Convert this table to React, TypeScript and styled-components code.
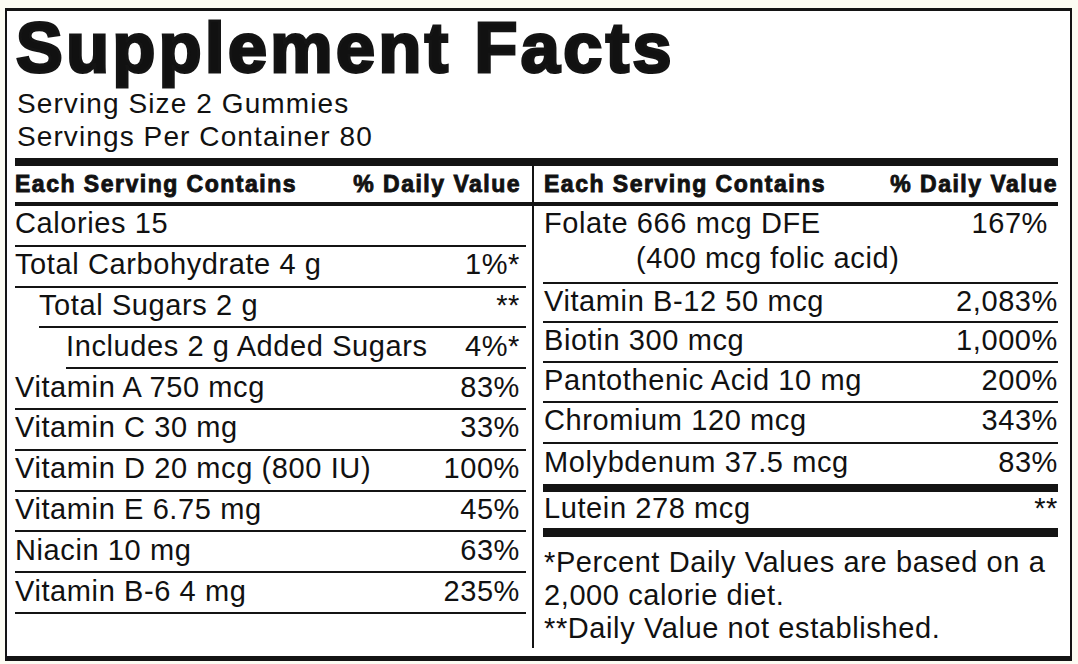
import React from 'react';
import styled, { createGlobalStyle } from 'styled-components';

const Global = createGlobalStyle`
  html, body { margin: 0; padding: 0; background: #fcfcf3; }
  body { font-family: "Liberation Sans", Arial, Helvetica, sans-serif; color: #111; }
`;

const INK = '#141414';

const Page = styled.div`
  width: 1078px;
  height: 664px;
  padding: 8px 0 0 5px;
  box-sizing: border-box;
  overflow: hidden;
`;

const Label = styled.div`
  box-sizing: border-box;
  width: 1067px;
  height: 653px;
  background: #fff;
  border-top: 3px solid ${INK};
  border-left: 2px solid ${INK};
  border-right: 2px solid ${INK};
  border-bottom: 5px solid ${INK};
  padding: 0 12px 8px 8px;
  display: flex;
  flex-direction: column;
`;

const Title = styled.h1`
  margin: 2px 0 0 1px;
  font-size: 70px;
  line-height: 70px;
  font-weight: 700;
  letter-spacing: 3.5px;
  -webkit-text-stroke: 3px ${INK};
  white-space: nowrap;
`;

const Serving = styled.div`
  margin-top: 3.5px;
  padding-left: 2px;
  font-size: 28px;
  line-height: 33px;
  letter-spacing: 1.1px;
  white-space: nowrap;
`;

const TopBar = styled.div`
  margin-top: 5.5px;
  height: 8px;
  background: ${INK};
`;

const Columns = styled.div`
  flex: 1;
  display: grid;
  grid-template-columns: 517px 2px 1fr;
  min-height: 0;
`;

const Divider = styled.div`
  background: ${INK};
`;

const Column = styled.div`
  display: flex;
  flex-direction: column;
  min-width: 0;
`;

const HeaderRow = styled.div<{ $side: 'left' | 'right' }>`
  height: 40px;
  box-sizing: border-box;
  border-bottom: 4px solid ${INK};
  display: flex;
  align-items: center;
  justify-content: space-between;
  padding: ${(p) => (p.$side === 'left' ? '0 11px 0 0' : '0 0 0 10px')};
  font-size: 23px;
  font-weight: 700;
  letter-spacing: 1.5px;
  -webkit-text-stroke: 0.9px ${INK};
  white-space: nowrap;
`;

const Row = styled.div<{ $indent?: number; $h?: number; $rule?: number; $side: 'left' | 'right' }>`
  box-sizing: border-box;
  height: ${(p) => p.$h ?? 40.8}px;
  margin-left: ${(p) => (p.$side === 'right' ? 9 : 0) + (p.$indent ?? 0)}px;
  margin-right: ${(p) => (p.$side === 'left' ? 6 : 0)}px;
  border-bottom: ${(p) => p.$rule ?? 2}px solid ${INK};
  display: flex;
  align-items: center;
  justify-content: space-between;
  padding: ${(p) => (p.$side === 'left' ? '0 6px 3px 0' : '0 0 3px 1px')};
  font-size: 29px;
  letter-spacing: 0.6px;
  white-space: nowrap;
`;

const TallRow = styled.div`
  box-sizing: border-box;
  height: 78px;
  margin-left: 9px;
  border-bottom: 2px solid ${INK};
  display: flex;
  align-items: flex-start;
  justify-content: space-between;
  padding: 0 10px 0 1px;
  font-size: 29px;
  line-height: 35px;
  letter-spacing: 0.6px;
  white-space: nowrap;
`;

const SubLine = styled.div`
  padding-left: 92px;
`;

const Value = styled.span`
  text-align: right;
`;

const Footnote = styled.div`
  margin-left: 9px;
  padding: 9px 0 0 1px;
  font-size: 29px;
  line-height: 33px;
  letter-spacing: 0.6px;
`;

type Item = { name: string; dv?: string; indent?: number };

const leftItems: Item[] = [
  { name: 'Calories 15' },
  { name: 'Total Carbohydrate 4 g', dv: '1%*' },
  { name: 'Total Sugars 2 g', dv: '**', indent: 24 },
  { name: 'Includes 2 g Added Sugars', dv: '4%*', indent: 51 },
  { name: 'Vitamin A 750 mcg', dv: '83%' },
  { name: 'Vitamin C 30 mg', dv: '33%' },
  { name: 'Vitamin D 20 mcg (800 IU)', dv: '100%' },
  { name: 'Vitamin E 6.75 mg', dv: '45%' },
  { name: 'Niacin 10 mg', dv: '63%' },
  { name: 'Vitamin B-6 4 mg', dv: '235%' },
];

const rightItems: (Item & { h: number; rule?: number })[] = [
  { name: 'Vitamin B-12 50 mcg', dv: '2,083%', h: 39 },
  { name: 'Biotin 300 mcg', dv: '1,000%', h: 40 },
  { name: 'Pantothenic Acid 10 mg', dv: '200%', h: 39.5 },
  { name: 'Chromium 120 mcg', dv: '343%', h: 41 },
  { name: 'Molybdenum 37.5 mcg', dv: '83%', h: 48.5, rule: 8 },
  { name: 'Lutein 278 mcg', dv: '**', h: 45, rule: 9 },
];

export default function App() {
  return (
    <Page>
      <Global />
      <Label>
        <Title>Supplement Facts</Title>
        <Serving>
          <div>Serving Size 2 Gummies</div>
          <div>Servings Per Container 80</div>
        </Serving>
        <TopBar />
        <Columns>
          <Column>
            <HeaderRow $side="left">
              <span>Each Serving Contains</span>
              <span>% Daily Value</span>
            </HeaderRow>
            {leftItems.map((it) => (
              <Row key={it.name} $side="left" $indent={it.indent}>
                <span>{it.name}</span>
                <Value>{it.dv ?? ''}</Value>
              </Row>
            ))}
          </Column>
          <Divider />
          <Column>
            <HeaderRow $side="right">
              <span>Each Serving Contains</span>
              <span>% Daily Value</span>
            </HeaderRow>
            <TallRow>
              <div>
                <div>Folate 666 mcg DFE</div>
                <SubLine>(400 mcg folic acid)</SubLine>
              </div>
              <Value>167%</Value>
            </TallRow>
            {rightItems.map((it) => (
              <Row key={it.name} $side="right" $h={it.h} $rule={it.rule}>
                <span>{it.name}</span>
                <Value>{it.dv}</Value>
              </Row>
            ))}
            <Footnote>
              <div>*Percent Daily Values are based on a</div>
              <div>2,000 calorie diet.</div>
              <div>**Daily Value not established.</div>
            </Footnote>
          </Column>
        </Columns>
      </Label>
    </Page>
  );
}
